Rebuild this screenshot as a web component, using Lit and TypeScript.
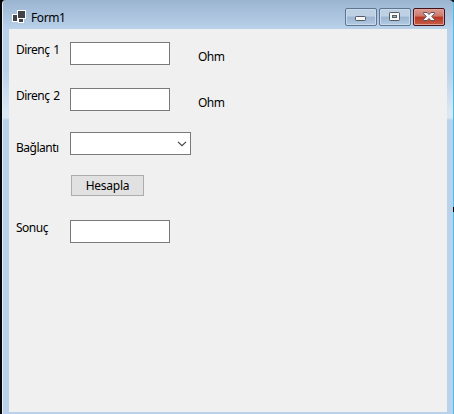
import { LitElement, html, css } from "lit";
import { customElement } from "lit/decorators.js";

@customElement("caption-buttons")
class CaptionButtons extends LitElement {
  static styles = css`
    :host { display: flex; gap: 2px; }
    .btn {
      box-sizing: border-box; width: 32px; height: 18px; padding: 0; margin: 0;
      border: 1px solid #5f7690; border-radius: 2px; display: block;
      background: linear-gradient(#bdd0e4 0 45%, #9bb5d0 50%, #b3cbe4);
      box-shadow: inset 0 0 0 1px #c9daeb;
    }
    .close {
      border-color: #45121c;
      background: linear-gradient(#dc9c90 0, #cf7769 45%, #b83521 50%, #c75d49);
      box-shadow: inset 0 0 0 1px #dda499;
    }
    svg { display: block; }
  `;

  render() {
    return html`
      <button class="btn" aria-label="Minimize">
        <svg width="30" height="16" viewBox="0 0 30 16">
          <rect x="9.5" y="7.5" width="10" height="4" rx=".7" fill="#f7f7f7" stroke="#545b65"/>
        </svg>
      </button>
      <button class="btn" aria-label="Maximize">
        <svg width="30" height="16" viewBox="0 0 30 16">
          <rect x="9.5" y="3.5" width="10" height="8" rx=".7" fill="#f7f7f7" stroke="#545b65"/>
          <rect x="12.5" y="6.5" width="4" height="2" fill="#8eb2d2" stroke="#545b65"/>
        </svg>
      </button>
      <button class="btn close" aria-label="Close">
        <svg width="30" height="16" viewBox="0 0 30 16">
          <path d="M9.5 3.5h3.6l1.9 2 1.9-2h3.6v1.2L17.7 7.5l2.8 2.8v1.2h-3.6l-1.9-2-1.9 2H9.5v-1.2l2.8-2.8-2.8-2.8z" fill="#f7f7f7" stroke="#5a5360"/>
        </svg>
      </button>
    `;
  }
}

@customElement("app-root")
class AppRoot extends LitElement {
  static styles = css`
    :host {
      display: block; width: 454px; height: 414px; overflow: hidden;
      font: 12px/16px "Noto Sans", "Open Sans", sans-serif; color: #000;
    }
    * { box-sizing: border-box; }
    .desktop {
      height: 100%; padding: 0 1px 0 2px;
      background:
        linear-gradient(#101820, #101820) right top / 5px 2px no-repeat,
        linear-gradient(90deg, #080808 0 7px, #45bfe8 7px);
    }
    .window {
      height: 100%; padding: 0 6px 2px; display: flex; flex-direction: column;
      border-left: 1px solid #e5eef7; border-radius: 4px 4px 0 0;
      background: linear-gradient(#9bb4d0 0, #b9d1ea 29px, #b9d1ea 70px, #dae7f5 112px, #dae7f5 118px, #b9d1ea 120px);
    }
    .titlebar { flex: none; height: 29px; display: flex; padding: 8px 2px 0 3px; }
    .app-icon { width: 15px; height: 15px; flex: none; margin-top: 1px; }
    .title { flex: 1; padding: 2px 0 0 4px; letter-spacing: -.4px; }
    .client {
      flex: 1; background: #f0f0f0; padding: 13px 0 0 7px;
      display: flex; flex-direction: column; align-items: flex-start;
    }
    .row { display: flex; height: 23px; }
    .second { margin-top: 23px; }
    .third { margin-top: 21px; }
    .result { margin-top: 24px; }
    .label { width: 54px; white-space: nowrap; letter-spacing: -.5px; word-spacing: 1px; }
    .low { padding-top: 8px; }
    .field { width: 100px; height: 23px; margin: 0; border: 1px solid #7a7a7a; background: #fff; padding: 0 4px; font: inherit; border-radius: 0; outline: 0; }
    .unit { margin-left: 28px; padding-top: 7px; letter-spacing: -.5px; }
    .combo { width: 121px; height: 23px; border: 1px solid #7a7a7a; background: #fff; display: flex; align-items: center; justify-content: flex-end; padding-right: 3px; }
    .calc {
      margin: 20px 0 0 55px; width: 73px; height: 21px; padding: 0; border: 1px solid #adadad;
      background: #e1e1e1; font: inherit; color: inherit; letter-spacing: -.25px; line-height: 19px;
    }
    .mark { position: absolute; right: 0; top: 207px; width: 1px; height: 5px; background: #000; }
  `;

  render() {
    return html`
      <div class="desktop">
        <div class="window">
          <div class="titlebar">
            <svg class="app-icon" viewBox="0 0 15 15">
              <rect x=".5" y="5.5" width="5" height="7" fill="#404347" stroke="#fff"/>
              <rect x="6.5" y="8.5" width="5" height="5" fill="#404347" stroke="#fff"/>
              <rect x="5.5" y="1.5" width="8" height="8" fill="#404347" stroke="#fff"/>
            </svg>
            <span class="title">Form1</span>
            <caption-buttons></caption-buttons>
          </div>
          <div class="client">
            <div class="row">
              <label class="label">Direnç 1</label>
              <input class="field" aria-label="Direnç 1">
              <span class="unit">Ohm</span>
            </div>
            <div class="row second">
              <label class="label">Direnç 2</label>
              <input class="field" aria-label="Direnç 2">
              <span class="unit">Ohm</span>
            </div>
            <div class="row third">
              <label class="label low">Bağlantı</label>
              <div class="combo" role="combobox" aria-label="Bağlantı">
                <svg width="10" height="6" viewBox="0 0 10 6"><path d="M1 .9 5 4.7 9 .9" fill="none" stroke="#444" stroke-width="1.2"/></svg>
              </div>
            </div>
            <button class="calc">Hesapla</button>
            <div class="row result">
              <label class="label">Sonuç</label>
              <input class="field" aria-label="Sonuç" readonly>
            </div>
          </div>
        </div>
      </div>
      <div class="mark"></div>
    `;
  }
}
